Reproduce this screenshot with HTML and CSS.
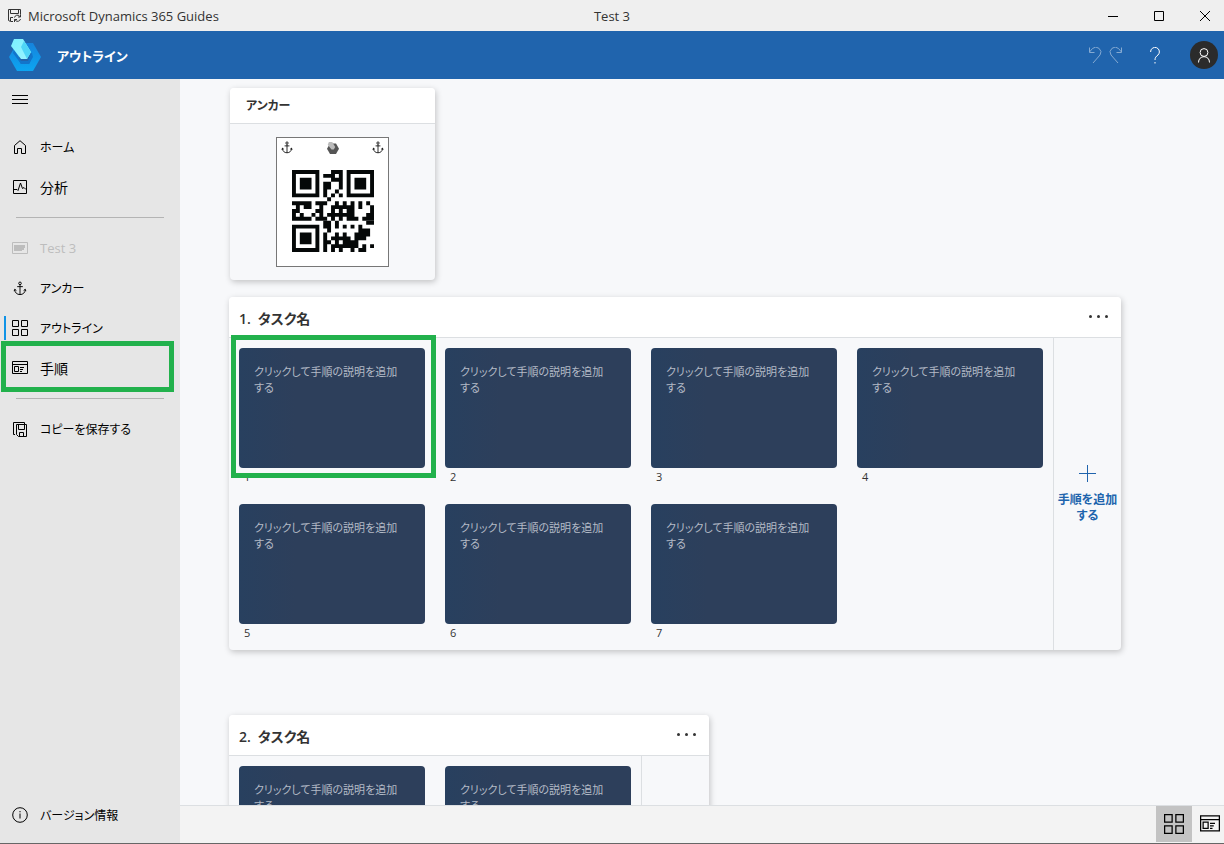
FILE: index.html
```html
<!DOCTYPE html>
<html lang="ja">
<head>
<meta charset="utf-8">
<title>Microsoft Dynamics 365 Guides</title>
<link rel="stylesheet" href="styles.css">
</head>
<body>
<svg class="defs" aria-hidden="true">
  <symbol id="anchor" viewBox="0 0 14 16"><circle cx="7" cy="2.5" r="1.4"/><path d="M7 4v10.5M4 6h6M1.3 9c.2 3.500 2.500 5.500 5.700 5.500s5.500-2 5.700-5.500M.7 10.800l.8-2 1.700 1.500M13.300 10.800l-.8-2-1.700 1.500"/></symbol>
  <symbol id="grid" viewBox="0 0 16 16"><path d="M.5.5h6v6h-6zM9.500.5h6v6h-6zM.5 9.500h6v6h-6zM9.500 9.500h6v6h-6z"/></symbol>
  <symbol id="steps" viewBox="0 0 16 14"><path d="M.5.5h15v12H.5zM.5 3.500h15M2.500 5.500h4v5h-4zM8 6.500h4M8 8.500h3M8 10.500h2"/></symbol>
</svg>
<header class="titlebar">
  <div class="app-name">
    <svg class="icon" width="13" height="13" viewBox="0 0 13 13"><path d="M5 12.500H2.500l-2-1V.5h12v5M2.500.5v4h8v-4M2.500 12V8.500H5M6.500 8.500a3 3 0 0 1 5-1.500l1 1M12.500 5.500V8H10M12.500 10a3 3 0 0 1-5 1.500l-1-1M6.500 13v-2.500H9"/></svg>
    <span>Microsoft Dynamics 365 Guides</span>
  </div>
  <div class="doc-name">Test 3</div>
  <div class="window-buttons">
    <button aria-label="最小化"><svg class="icon" width="10" height="10" viewBox="0 0 10 10"><path d="M0 5.500h10"/></svg></button>
    <button aria-label="最大化"><svg class="icon" width="10" height="10" viewBox="0 0 10 10"><path d="M.5.5h9v9h-9z"/></svg></button>
    <button aria-label="閉じる"><svg class="icon" width="10" height="10" viewBox="0 0 10 10"><path d="M0 0l10 10M10 0L0 10"/></svg></button>
  </div>
</header>
<div class="appbar">
  <svg class="logo" width="32" height="32" viewBox="0 0 32 32">
    <defs>
      <linearGradient id="g1" x1="0" y1="0" x2="0" y2="1"><stop offset="0" stop-color="#1683dc"/><stop offset="1" stop-color="#0ca6f2"/></linearGradient>
      <linearGradient id="g2" x1="0" y1="0" x2="1" y2="1"><stop offset="0" stop-color="#7af0ff"/><stop offset="1" stop-color="#9cf3ff"/></linearGradient>
    </defs>
    <path fill="url(#g1)" d="M8 4h16l8 14-8 14H8L0 18z"/>
    <path fill="#2064ad" d="M13 14h9l1 4-3 7h-8l-3-6z"/>
    <path fill="#1275cb" d="M5 10l7 12h7l3-8h1l1 4-4 7h-8L4 14z"/>
    <path fill="url(#g2)" d="M5 0h9l8 13-4 7h-6L2 7z"/>
    <path fill="#4fd5f7" d="M12 8l3-6 7 11-4 7z"/>
  </svg>
  <h1>アウトライン</h1>
  <div class="appbar-actions">
    <button class="faded" aria-label="元に戻す"><svg class="icon" width="13" height="17" viewBox="0 0 13 17"><path d="M.5.5v5h5M.5 5l3-3.500a5 5 0 0 1 7.500 6.500L4 16"/></svg></button>
    <button class="faded" aria-label="やり直し"><svg class="icon" width="13" height="17" viewBox="0 0 13 17"><path d="M12.500.5v5h-5M12.500 5l-3-3.500A5 5 0 0 0 2 8l7 8"/></svg></button>
    <button class="help" aria-label="ヘルプ"><svg class="icon" width="10" height="17" viewBox="0 0 10 17"><path d="M.6 5a4.400 4.400 0 1 1 7.400 3c-2 1.500-3 2.500-3 5M5 15v1.500"/></svg></button>
    <button class="avatar" aria-label="アカウント"><svg class="icon" width="12" height="15" viewBox="0 0 12 15"><circle cx="6" cy="4.500" r="3.900"/><path d="M.5 14.500c0-3.800 2.500-5.800 5.500-5.800s5.500 2 5.500 5.800"/></svg></button>
  </div>
</div>
<div class="workspace">
  <nav class="sidebar">
    <button class="nav-item" aria-label="メニュー"><svg class="icon" width="16" height="9" viewBox="0 0 16 9"><path d="M0 .5h16M0 4.500h16M0 8.500h16"/></svg></button>
    <div class="nav-gap"></div>
    <button class="nav-item kana"><svg class="icon" width="16" height="14" viewBox="0 0 16 14"><path d="M2.500 5.500v8h3v-5h4v5h4v-8L8 .7z"/></svg>ホーム</button>
    <button class="nav-item"><svg class="icon" width="16" height="14" viewBox="0 0 16 14"><path d="M1.500.5h13v13h-13zM2 9.500h3l1 1 2.500-7.500 2 5.500 1.500-1 2 2"/></svg>分析</button>
    <hr>
    <button class="nav-item" disabled><svg class="icon" width="16" height="12" viewBox="0 0 16 12"><path d="M.5.5h15v11H.5z"/><path fill="currentColor" stroke="none" d="M2 3h11v3h-1v2h-2v1H2z"/></svg><span class="latin">Test 3</span></button>
    <button class="nav-item kana"><svg class="icon" width="16" height="15"><use href="#anchor"/></svg>アンカー</button>
    <button class="nav-item kana selected"><svg class="icon" width="16" height="16"><use href="#grid"/></svg>アウトライン</button>
    <button class="nav-item"><svg class="icon" width="16" height="14"><use href="#steps"/></svg>手順<span class="marker"></span></button>
    <hr>
    <button class="nav-item kana"><svg class="icon" width="16" height="15" viewBox="0 0 16 15"><path d="M3 12.500H1.500V.5h11V2M4.500 2.500h10v12h-8l-2-2zM6.500 2.500v5h6v-5M7.500 14.500v-4h4v4"/></svg>コピーを保存する</button>
    <button class="nav-item kana about"><svg class="icon" width="16" height="16" viewBox="0 0 16 16"><circle cx="8" cy="8" r="7.300"/><path d="M8 6.500v5M8 4v1.300"/></svg>バージョン情報</button>
  </nav>
  <div class="content">
    <main class="canvas">
      <section class="card anchor-card">
        <h2>アンカー</h2>
        <div class="anchor-body">
          <div class="sheet">
            <div class="sheet-top">
              <svg class="icon" width="12" height="13"><use href="#anchor"/></svg>
              <svg width="12" height="12" viewBox="0 0 32 32"><path fill="#555" d="M8 4h16l8 14-8 14H8L0 18z"/><path fill="#bbb" d="M5 0h9l8 13-4 7h-6L2 7z"/></svg>
              <svg class="icon" width="12" height="13"><use href="#anchor"/></svg>
            </div>
            <svg class="qr" width="82" height="82" viewBox="0 0 21 21" role="img" aria-label="QR コード">
              <path class="finder" d="M.5.5h6v6h-6zM14.500.5h6v6h-6zM.5 14.500h6v6h-6z"/>
              <path class="eye" d="M2 2h3v3H2zM16 2h3v3h-3zM2 16h3v3H2z"/>
              <path d="M10 .5h3M8 1.500h3M12 1.500h1M10 2.500h3M8 3.500h2M12 3.500h1M8 4.500h2M12 4.500h1M8 5.500h1M11 5.500h1M8 6.500h1M10 6.500h1M12 6.500h1M9 7.500h1"/>
              <path d="M0 8.500h5M6 8.500h3M11 8.500h1M13 8.500h1M15 8.500h1M17 8.500h1M19 8.500h1M1 9.500h1M3 9.500h2M7 9.500h1M10 9.500h6M17 9.500h1M20 9.500h1M0 10.500h2M6 10.500h2M10 10.500h1M12 10.500h1M14 10.500h2M20 10.500h1M0 11.500h1M2 11.500h1M5 11.500h1M7 11.500h1M9 11.500h7M19 11.500h2M0 12.500h5M6 12.500h3M10 12.500h1M12 12.500h1M14 12.500h3M18 12.500h3"/>
              <path d="M8 13.500h2M11 13.500h1M19 13.500h2M8 14.500h2M11 14.500h1M13 14.500h1M15 14.500h1M17 14.500h1M9 15.500h1M17 15.500h3M8 16.500h1M11 16.500h1M13 16.500h1M16 16.500h4M8 17.500h1M10 17.500h5M16 17.500h3M8 18.500h2M11 18.500h1M13 18.500h4M8 19.500h1M10 19.500h7M18 19.500h1M20 19.500h1M8 20.500h1M10 20.500h1M12 20.500h1M15 20.500h1M17 20.500h2"/>
            </svg>
          </div>
        </div>
      </section>
      <section class="card task">
        <div class="task-head"><h2>1.&ensp;タスク名</h2><button class="more" aria-label="その他"><i></i><i></i><i></i></button></div>
        <div class="task-body">
          <ol class="step-grid">
            <li><button class="step">クリックして手順の説明を追加する</button><span class="num">1</span><span class="marker"></span></li>
            <li><button class="step">クリックして手順の説明を追加する</button><span class="num">2</span></li>
            <li><button class="step">クリックして手順の説明を追加する</button><span class="num">3</span></li>
            <li><button class="step">クリックして手順の説明を追加する</button><span class="num">4</span></li>
            <li><button class="step">クリックして手順の説明を追加する</button><span class="num">5</span></li>
            <li><button class="step">クリックして手順の説明を追加する</button><span class="num">6</span></li>
            <li><button class="step">クリックして手順の説明を追加する</button><span class="num">7</span></li>
          </ol>
          <button class="add-step"><svg class="icon" width="17" height="17" viewBox="0 0 17 17"><path d="M0 8.500h17M8.500 0v17"/></svg>手順を追加する</button>
        </div>
      </section>
      <section class="card task">
        <div class="task-head"><h2>2.&ensp;タスク名</h2><button class="more" aria-label="その他"><i></i><i></i><i></i></button></div>
        <div class="task-body">
          <ol class="step-grid two">
            <li><button class="step">クリックして手順の説明を追加する</button><span class="num">1</span></li>
            <li><button class="step">クリックして手順の説明を追加する</button><span class="num">2</span></li>
          </ol>
          <button class="add-step"><svg class="icon" width="17" height="17" viewBox="0 0 17 17"><path d="M0 8.500h17M8.500 0v17"/></svg>手順を追加する</button>
        </div>
      </section>
    </main>
    <footer class="viewbar">
      <button class="active" aria-label="アウトライン"><svg class="icon" width="20" height="20"><use href="#grid"/></svg></button>
      <button aria-label="手順"><svg class="icon" width="20" height="18"><use href="#steps"/></svg></button>
    </footer>
  </div>
</div>
</body>
</html>
```
FILE: styles.css
```css
* { box-sizing: border-box; }

body {
  margin: 0;
  height: 100vh;
  display: flex;
  flex-direction: column;
  overflow: hidden;
  border-bottom: 1px solid #666;
  font-family: "Open Sans", "Noto Sans CJK JP", sans-serif;
  font-size: 14px;
  font-feature-settings: "palt";
  color: #000;
}

button {
  font: inherit;
  font-feature-settings: inherit;
  color: inherit;
  background: none;
  border: 0;
  padding: 0;
}

h1, h2, ol { margin: 0; padding: 0; }
ol { list-style: none; }

.defs { position: absolute; width: 0; height: 0; }

.icon {
  flex: none;
  fill: none;
  stroke: currentColor;
  stroke-width: 1;
}

.titlebar {
  flex: none;
  height: 31px;
  display: grid;
  grid-template-columns: 1fr auto 1fr;
  align-items: center;
  background: #efefef;
  font-size: 13px;
  color: #333;
}
.app-name { display: flex; align-items: center; gap: 7px; padding-left: 8px; }
.window-buttons { display: flex; justify-content: flex-end; color: #000; }
.window-buttons button { width: 46px; height: 31px; display: grid; place-items: center; }
.window-buttons button:last-child { width: 42px; padding-left: 4px; }

.appbar {
  flex: none;
  height: 48px;
  display: flex;
  align-items: center;
  padding: 0 6px 0 9px;
  background: #2064ad;
  color: #fff;
}
.appbar h1 { margin-left: 16px; font-size: 13px; font-weight: 600; }
.appbar-actions { margin-left: auto; display: flex; align-items: center; }
.appbar-actions button { display: grid; place-items: center; }
.appbar-actions .faded { width: 20px; height: 32px; opacity: 0.45; }
.appbar-actions .help { width: 60px; height: 32px; }
.appbar-actions .avatar { width: 28px; height: 28px; margin-left: 5px; border-radius: 50%; background: #2b2b2b; }

.workspace { flex: 1; min-height: 0; display: flex; }

.sidebar {
  flex: none;
  width: 180px;
  display: flex;
  flex-direction: column;
  background: #e6e6e6;
  padding-bottom: 8px;
}
.nav-item {
  position: relative;
  flex: none;
  height: 40px;
  display: flex;
  align-items: center;
  gap: 12px;
  padding: 0 12px;
  text-align: left;
}
.nav-item:disabled { color: #bdbdbd; }
.nav-item.kana { font-size: 12px; }
.latin { font-size: 13px; }
.nav-gap { height: 8px; }
.about { margin-top: auto; }
.selected::before {
  content: "";
  position: absolute;
  left: 4px;
  top: 8px;
  width: 2px;
  height: 24px;
  background: #0f93e6;
}
.sidebar hr { flex: none; width: 148px; margin: 10px 16px; border: 0; border-top: 1px solid #b4b4b4; }

.marker { position: absolute; z-index: 1; border: 5px solid #22b14c; }
.nav-item .marker { inset: -7px 6px -4px 1px; }
.step-grid .marker { inset: -13px -11px 6px -8px; }

.content { flex: 1; min-width: 0; display: flex; flex-direction: column; background: #f7f8fa; }
.canvas {
  flex: 1;
  min-height: 0;
  overflow: hidden;
  padding: 9px 0 0 49px;
}
.card {
  width: fit-content;
  border-radius: 4px;
  background: #f7f8fa;
  box-shadow: 1px 2px 6px rgba(0, 0, 0, 0.22);
}
.card h2 { color: #333; font-weight: 600; }

.anchor-card { width: 205px; margin: 0 0 17px 1px; }
.anchor-card h2 {
  height: 36px;
  padding: 0 16px;
  line-height: 35px;
  font-size: 12px;
  background: #fff;
  border-bottom: 1px solid #dcdfe2;
  border-radius: 4px 4px 0 0;
}
.anchor-body { display: flex; justify-content: center; padding: 13px 0; }
.sheet {
  width: 113px;
  display: flex;
  flex-direction: column;
  align-items: center;
  gap: 16px;
  padding: 3px 4px 14px;
  background: #fff;
  border: 1px solid #777;
}
.sheet-top { width: 100%; display: flex; justify-content: space-between; align-items: center; }
.qr { stroke: #050808; fill: none; }
.qr .finder { stroke-width: 1; }
.qr .eye { stroke: none; fill: #050808; }

.task { margin-bottom: 65px; }
.task-head {
  height: 41px;
  display: flex;
  align-items: center;
  justify-content: space-between;
  padding: 4px 10px 0;
  background: #fff;
  border-bottom: 1px solid #dcdfe2;
  border-radius: 4px 4px 0 0;
}
.task-head h2 { font-size: 14px; line-height: 20px; }
.more { width: 26px; height: 20px; display: flex; justify-content: center; gap: 5px; padding-bottom: 5px; align-items: center; }
.more i { width: 3px; height: 3px; background: #333; border-radius: 50%; }
.task-body { display: flex; }
.step-grid {
  display: grid;
  grid-template-columns: repeat(4, 186px);
  gap: 20px;
  padding: 10px;
}
.step-grid.two { grid-template-columns: repeat(2, 186px); }
.step-grid li { position: relative; display: flex; flex-direction: column; }
.step {
  height: 120px;
  display: flex;
  align-items: flex-start;
  padding: 16px 22px 16px 15px;
  border-radius: 4px;
  background: linear-gradient(90deg, #28405f, #2d3f5b 30%);
  color: #b3bac6;
  font-size: 11px;
  line-height: 16px;
  text-align: left;
}
.num { height: 16px; padding-left: 5px; font-size: 11px; line-height: 18px; color: #333; }
.add-step {
  width: 68px;
  display: flex;
  flex-direction: column;
  align-items: center;
  justify-content: center;
  gap: 10px;
  border-left: 1px solid #dcdfe2;
  padding: 0 2px;
  color: #2064ad;
  font-size: 12px;
  font-weight: 600;
  line-height: 16px;
}

.viewbar {
  flex: none;
  height: 38px;
  display: flex;
  justify-content: flex-end;
  padding-bottom: 1px;
  border-top: 1px solid #dcdfe2;
  background: #f3f3f3;
}
.viewbar button { width: 36px; display: grid; place-items: center; }
.viewbar button:last-child { width: 32px; padding-left: 4px; }
.viewbar .active { background: #c3c3c3; }
```
